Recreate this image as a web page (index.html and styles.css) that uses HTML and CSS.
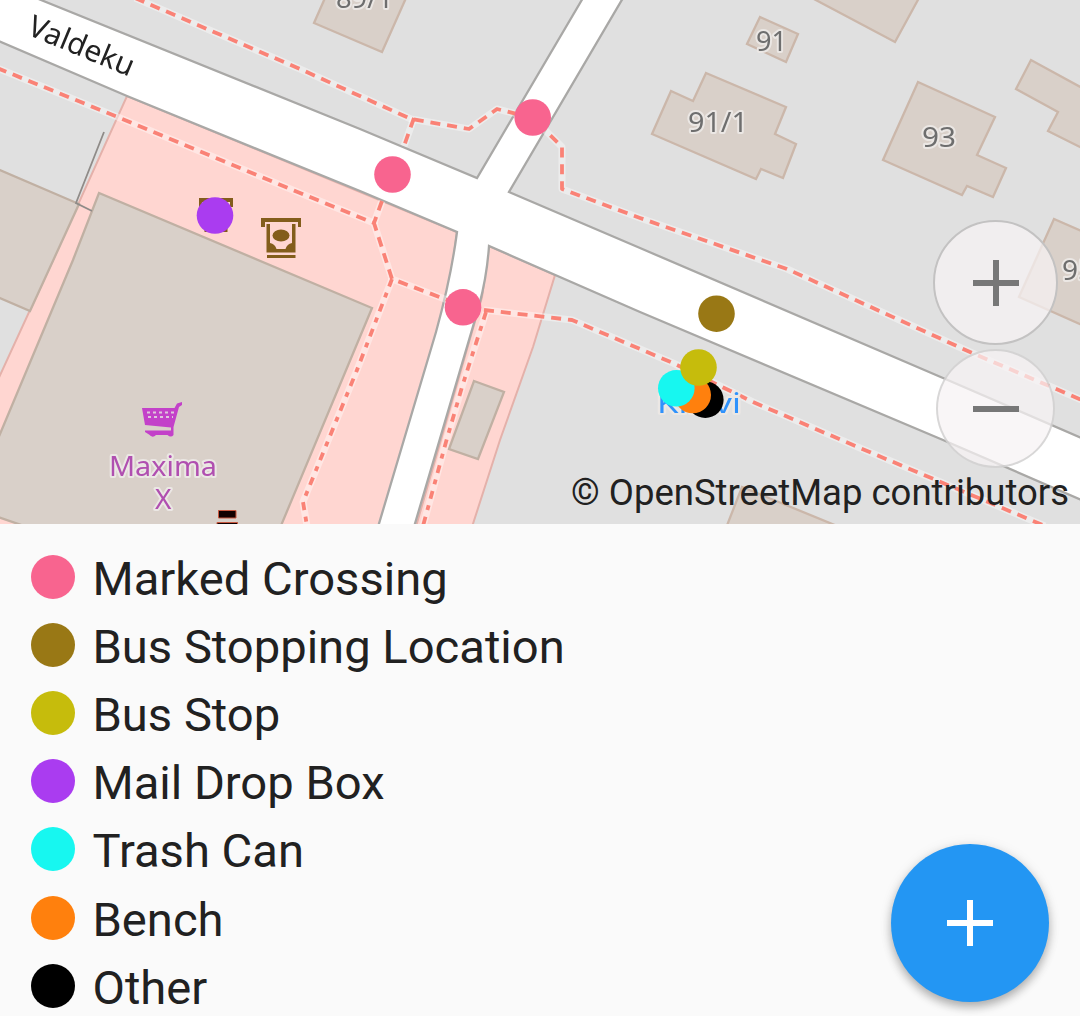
FILE: index.html
```html
<!DOCTYPE html>
<html lang="en">
<head>
<meta charset="utf-8">
<title>Map</title>
<link rel="stylesheet" href="styles.css">
</head>
<body>
<main class="screen">
  <section class="map">
    <svg class="tiles" viewBox="0 0 1080 524" width="1080" height="524">
      <g class="base">
      <g class="retail">
        <path d="M127 96L457 232L452 268L443 327L379 530H-4V384L53 260Z"/>
        <path d="M489 246L555 275L533 347L500 440L471 530H415L482 297Z"/>
      </g>
      <g class="building">
        <path d="M-5 168L79 204L30 311L-5 296"/>
        <path d="M-5 446L73 260L99 193L372 308L280 528H30L-5 516"/>
        <path d="M474 381L504 392L478 459L449 449Z"/>
      </g>
      <g class="building house">
        <path d="M325 -2L314 23L382 52L406 -2"/>
        <path d="M760 17L798 34L786 62L747 44Z"/>
        <path d="M706 73L786 107L775 134L796 144L783 178L761 169L756 179L652 134L671 91L693 101Z"/>
        <path d="M918 82L995 117L977 155L1006 168L993 197L967 186L962 195L883 160Z"/>
        <path d="M812 -2L895 42L919 -2"/>
        <path d="M1084 89L1031 60L1016 89L1058 112L1048 131L1084 149"/>
        <path d="M1084 232L1054 219L1019 297L1084 326"/>
        <path d="M726 528L742 487L842 528"/>
      </g>
      <path class="road" d="M36 -2L360 129L477 178L583 -2H623L509 192L640 248L943 378L1084 439V501L943 440L640 312L489 246Q487 276 479 306L414 527H378L436 332Q451 278 457 232L360 191L127 96L-4 40V-2Z"/>
      <path class="fence" d="M104 132L76 203L92 211"/>
      <g class="walk-halo">
        <path d="M135 -2L300 69L411 119L469 129L497 109L533 118L562 147V189L640 218L787 269L970 352L1084 401"/>
        <path d="M414 118L404 146M382 201L374 223"/>
        <path d="M-3 68L120 118L300 193L374 223L392 279L450 301M484 310L572 320L673 363L753 402L860 448L1045 526"/>
        <path d="M392 279L357 370L303 502L307 526M486 312L462 387L446 442L423 526"/>
      </g>
      <g class="walk">
        <path d="M135 -2L300 69L411 119L469 129L497 109L533 118L562 147V189L640 218L787 269L970 352L1084 401"/>
        <path d="M414 118L404 146M382 201L374 223"/>
        <path d="M-3 68L120 118L300 193L374 223L392 279L450 301M484 310L572 320L673 363L753 402L860 448L1045 526"/>
      </g>
      <path class="walk narrow" d="M392 279L357 370L303 502L307 526M486 312L462 387L446 442L423 526"/>

      <g fill="#835d1b">
        <path d="M199 198H233V207H230V202H202V207H199Z"/>
        <path d="M204.500 225H227.500V232H204.500Z"/>
      </g>
      <g fill="#835d1b">
        <path d="M261 218H301V227H298V222H265V227H261Z"/>
        <path fill-rule="evenodd" d="M266.500 224H270V243Q275 244 276.500 249H285.500Q287 244 292 243V224H295.500V252.500H266.500Z"/>
        <ellipse cx="281" cy="235.500" rx="8.500" ry="6"/>
        <path d="M267 255H295.500V258H267Z"/>
      </g>
      <g class="cart">
        <path fill="#c341c9" d="M142 408H174.500L177 403.500L182 402V405L179 407L173.500 427V435Q171 438 167.500 435H156Q152.500 438.500 149 434.500L145 432V430.500H171V427.500L145 425Z"/>
        <path fill="none" stroke="#dfc5dc" stroke-width="2" stroke-dasharray="3 3" d="M147 412.500H174M148 417H173"/>
      </g>
      <g class="bench">
        <path d="M218.500 510.500H236V518H218.500ZM217 522.500H237.500V526H217Z"/>
      </g>

      <g class="label">
        <text class="street" transform="translate(26 34) rotate(22.500)" textLength="112" lengthAdjust="spacingAndGlyphs">Valdeku</text>
        <text x="336" y="8" textLength="57" lengthAdjust="spacingAndGlyphs">89/1</text>
        <text x="756" y="51" textLength="31" lengthAdjust="spacingAndGlyphs">91</text>
        <text x="688" y="132" textLength="60" lengthAdjust="spacingAndGlyphs">91/1</text>
        <text x="922" y="147" textLength="34" lengthAdjust="spacingAndGlyphs">93</text>
        <text x="1062" y="280">95</text>
        <text class="shop" x="109" y="476" textLength="108" lengthAdjust="spacingAndGlyphs">Maxima</text>
        <text class="shop" x="155" y="509">X</text>
        <text class="stop" x="657" y="413" textLength="84" lengthAdjust="spacingAndGlyphs">Kiilivi</text>
      </g>
      </g>
      <g class="markers">
        <circle cx="392.500" cy="174.500" r="18.300" fill="#f8648f"/>
        <circle cx="532.700" cy="117.500" r="18.300" fill="#f8648f"/>
        <circle cx="463" cy="307.300" r="18.300" fill="#f8648f"/>
        <circle cx="716.500" cy="313.700" r="18.300" fill="#997815"/>
        <circle cx="215" cy="215.500" r="18.300" fill="#aa3cf0"/>
        <circle cx="705.300" cy="399.700" r="18.300" fill="#000"/>
        <circle cx="692.700" cy="395" r="18.300" fill="#ff800d"/>
        <circle cx="676.300" cy="388.300" r="18.300" fill="#17f7f0"/>
        <circle cx="698.500" cy="367.500" r="18.300" fill="#c6bc0c"/>
      </g>
    </svg>
    <div class="zoom">
      <button class="zoom-btn in" aria-label="Zoom in"><svg width="46" height="46"><path d="M0 23H46M23 0V46"/></svg></button>
      <button class="zoom-btn out" aria-label="Zoom out"><svg width="46" height="46"><path d="M0 23H46"/></svg></button>
    </div>
    <div class="credit">© OpenStreetMap contributors</div>
  </section>
  <ul class="legend">
    <li><i class="dot crossing"></i><span>Marked Crossing</span></li>
    <li><i class="dot stopping"></i><span>Bus Stopping Location</span></li>
    <li><i class="dot bus"></i><span>Bus Stop</span></li>
    <li><i class="dot mail"></i><span>Mail Drop Box</span></li>
    <li><i class="dot trash"></i><span>Trash Can</span></li>
    <li><i class="dot seat"></i><span>Bench</span></li>
    <li><i class="dot other"></i><span>Other</span></li>
  </ul>
  <button class="fab" aria-label="Add"><svg width="46" height="46"><path d="M0 23H46M23 0V46"/></svg></button>
</main>
</body>
</html>
```
FILE: styles.css
```css
* { box-sizing: border-box; }
body { margin: 0; background: #fafafa; color: #212121; font-family: Roboto, sans-serif; }
button { border: 0; padding: 0; }
.screen { position: relative; width: 1080px; height: 1016px; overflow: hidden; }
.map { position: relative; height: 524px; background: #e0e0e0; overflow: hidden; }
.tiles { display: block; }
.base { filter: blur(.6px); }
.retail { fill: #ffd6d1; stroke: #e4b1aa; stroke-width: 2; }
.building { fill: #d9d0c9; stroke: #c0b0a3; stroke-width: 2.3; }
.house { stroke: #cbb7aa; }
.road { fill: #fff; stroke: #a9a8a6; stroke-width: 2.3; }
.fence { fill: none; stroke: #8f8b88; stroke-width: 1.8; }
.walk-halo { fill: none; stroke: #fff; stroke-opacity: .4; stroke-width: 7; stroke-linejoin: round; }
.walk { fill: none; stroke: #fa8276; stroke-width: 3.8; stroke-dasharray: 10 6.9; stroke-linejoin: round; }
.narrow { stroke-dasharray: 8 6.700 5 7; }
.cart path { fill-rule: evenodd; }
.bench { fill: #120000; stroke: #c8573f; stroke-width: 1; }
.label { font-family: "Noto Sans", sans-serif; font-size: 28px; fill: #6e6e6e; stroke: #ebe7e4; stroke-width: 4; stroke-linejoin: round; paint-order: stroke; }
.label .street { font-size: 30px; fill: #222; stroke: none; }
.label .shop { fill: #b04fb0; }
.label .stop { font-size: 27px; fill: #2f92fc; }
.zoom { position: absolute; top: 220px; right: 22px; display: flex; flex-direction: column; align-items: center; gap: 4px; }
.zoom-btn { display: grid; place-items: center; border-radius: 50%; background: rgba(246, 243, 244, .72); }
.in { width: 125px; height: 125px; border: 2px solid #c3c2c2; }
.out { width: 119px; height: 119px; border: 2px solid rgba(190, 189, 189, .55); }
.zoom-btn svg { stroke: #777; stroke-width: 6; }
.credit { position: absolute; right: 11px; bottom: 9px; font-size: 36.5px; line-height: 44px; white-space: nowrap; }
.legend { list-style: none; margin: 0; padding: 19px 30.5px 0; display: grid; grid-auto-rows: 68.200px; }
.legend li { display: flex; align-items: center; gap: 18px; font-size: 47.15px; line-height: 68px; white-space: nowrap; }
.legend span { padding-top: 3px; }
.dot { width: 44px; height: 44px; border-radius: 50%; margin-top: -1px; }
.crossing { background: #f8648f; }
.stopping { background: #997815; }
.bus { background: #c6bc0c; }
.mail { background: #aa3cf0; }
.trash { background: #17f7f0; }
.seat { background: #ff800d; }
.other { background: #000; }
.fab { position: absolute; left: 891px; top: 844px; width: 158px; height: 158px; border-radius: 50%; display: grid; place-items: center; background: #2396f3; box-shadow: 0 5px 10px rgba(0, 0, 0, .28), 0 1px 14px rgba(0, 0, 0, .08); }
.fab svg { stroke: #fff; stroke-width: 6; }
```
